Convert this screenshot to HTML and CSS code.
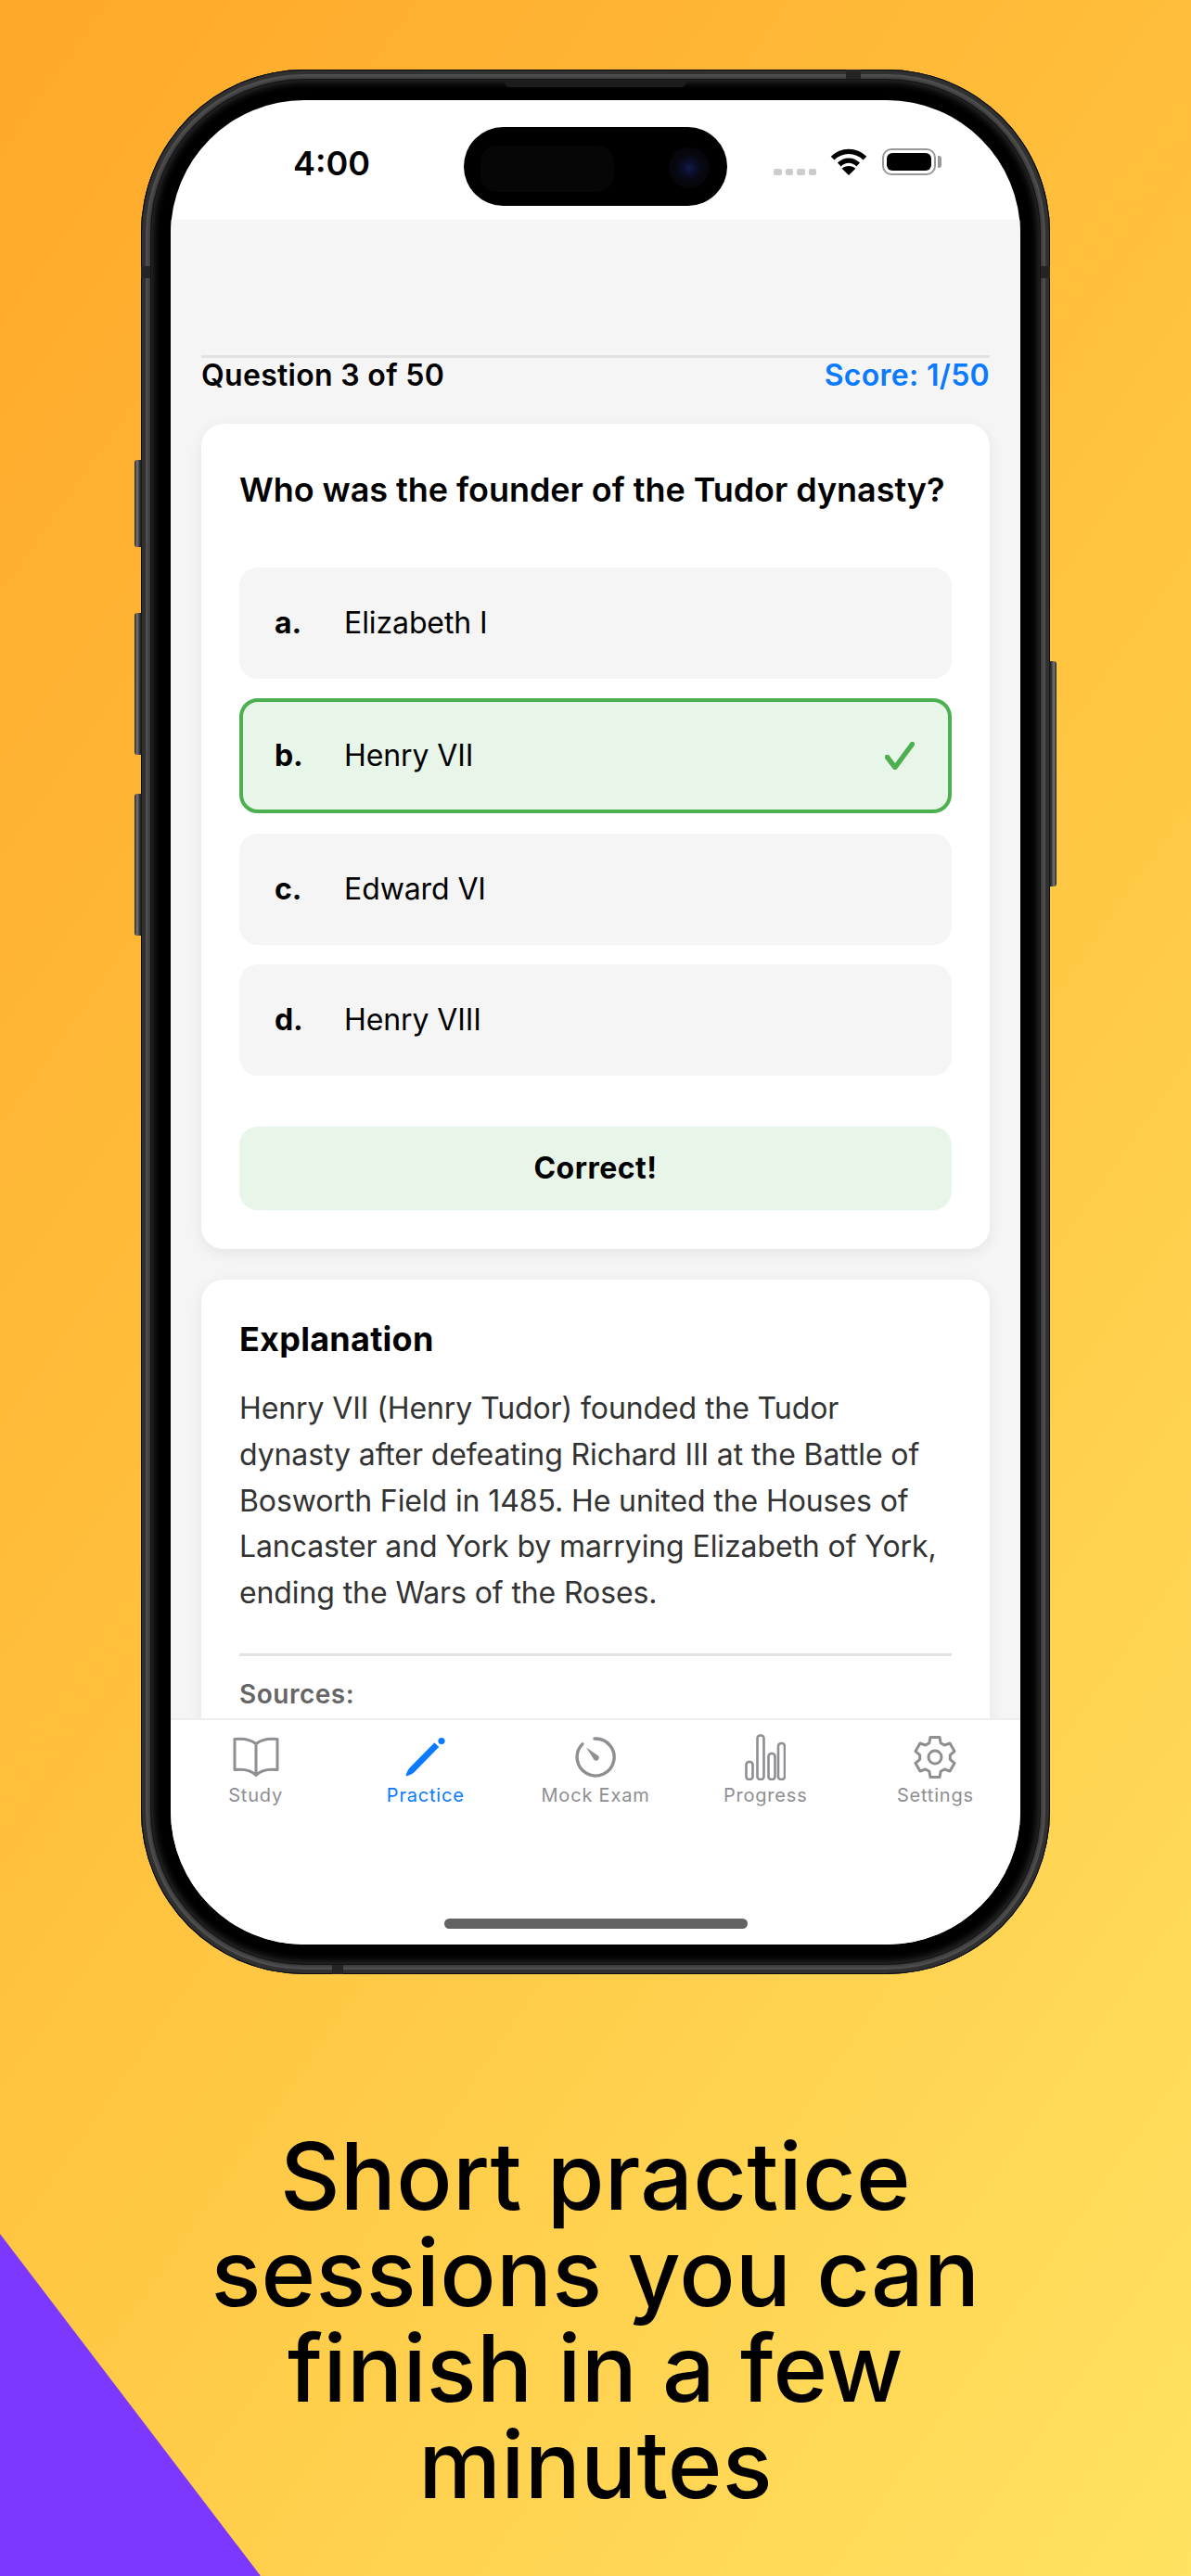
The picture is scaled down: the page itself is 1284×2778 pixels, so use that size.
FILE: index.html
```html
<!DOCTYPE html>
<html lang="en">
<head>
    <meta charset="UTF-8">
    <meta name="viewport" content="width=device-width, initial-scale=1.0">
    <title>Short practice sessions</title>
    <link rel="stylesheet" href="styles.css">
</head>
<body>
    <div class="corner"></div>

    <div class="phone">
        <span class="side-btn btn-mute"></span>
        <span class="side-btn btn-up"></span>
        <span class="side-btn btn-down"></span>
        <span class="side-btn btn-power"></span>
        <span class="band band-top"></span>
        <span class="band band-bottom"></span>
        <span class="band band-left"></span>
        <span class="band band-right"></span>

        <div class="bezel">
            <span class="speaker"></span>
            <div class="screen">
                <div class="status-bar">
                    <div class="time">4:00</div>
                    <div class="island">
                        <span class="island-sensor"></span>
                        <span class="island-lens"></span>
                    </div>
                    <div class="status-icons">
                        <div class="signal"><i></i><i></i><i></i><i></i></div>
                        <svg class="wifi" viewBox="0 0 40 29">
                            <path d="M2.6 10.6C12.5 .9 27.5 .9 37.4 10.6" fill="none" stroke="#000" stroke-width="5.4"/>
                            <path d="M9.8 17.5C15.8 11.6 24.2 11.6 30.2 17.5" fill="none" stroke="#000" stroke-width="5.4"/>
                            <path d="M20 29L12.6 21.8C16.8 18.2 23.2 18.2 27.4 21.8Z"/>
                        </svg>
                        <div class="battery"><span class="battery-fill"></span></div>
                    </div>
                </div>

                <div class="content">
                    <div class="progress-row">
                        <span class="progress-label">Question 3 of 50</span>
                        <span class="score">Score: 1/50</span>
                    </div>

                    <div class="card quiz-card">
                        <h2 class="question">Who was the founder of the Tudor dynasty?</h2>
                        <div class="options">
                            <div class="option"><b>a.</b><span>Elizabeth I</span></div>
                            <div class="option correct">
                                <b>b.</b><span>Henry VII</span>
                                <svg class="tick" viewBox="0 0 32 30"><path d="M2.5 16.5L11 27.5L29.5 2.5" fill="none" stroke="#4caf50" stroke-width="5.4" stroke-linecap="round" stroke-linejoin="round"/></svg>
                            </div>
                            <div class="option"><b>c.</b><span>Edward VI</span></div>
                            <div class="option"><b>d.</b><span>Henry VIII</span></div>
                        </div>
                        <div class="result">Correct!</div>
                    </div>

                    <div class="card explain-card">
                        <h3>Explanation</h3>
                        <p>Henry VII (Henry Tudor) founded the Tudor dynasty after defeating Richard III at the Battle of Bosworth Field in 1485. He united the Houses of Lancaster and York by marrying Elizabeth of York, ending the Wars of the Roses.</p>
                        <div class="rule"></div>
                        <div class="sources">Sources:</div>
                    </div>
                </div>

                <div class="tabbar">
                    <div class="tab">
                        <svg class="tab-icon" width="50" height="50" viewBox="0 0 50 50">
                            <path d="M25 10.5C20 6.5 11 4.5 2 5.5V38.5C11 37.5 20 39 25 44.5C30 39 39 37.5 48 38.5V5.5C39 4.5 30 6.5 25 10.5ZM25 10.5V44.5" fill="none" stroke="#8e8e93" stroke-width="3" stroke-linejoin="round"/>
                        </svg>
                        <span>Study</span>
                    </div>
                    <div class="tab active">
                        <svg class="tab-icon" width="44" height="50" viewBox="0 0 44 44">
                            <path d="M.5 42.5C1 39 2.5 36 5 33L31.4 6.2L36.2 11L10 37.8C7.5 40.3 4 41.7 .5 42.5Z" fill="#0a7aff"/>
                            <circle cx="39" cy="4.5" r="3.6" fill="#0a7aff"/>
                        </svg>
                        <span>Practice</span>
                    </div>
                    <div class="tab">
                        <svg class="tab-icon" width="44" height="50" viewBox="0 0 44 44">
                            <path d="M21 2A20 20 0 1 1 7.9 7.9" fill="none" stroke="#8e8e93" stroke-width="3.4" stroke-linecap="round"/>
                            <path d="M12 11.5L25 20.5C26 22 26 23.5 25 24.8C23.6 26 22 26 20.6 25Z" fill="#8e8e93"/>
                        </svg>
                        <span>Mock Exam</span>
                    </div>
                    <div class="tab">
                        <svg class="tab-icon" width="44" height="50" viewBox="0 0 44 50">
                            <rect x="1.5" y="30" width="7" height="19" rx="3" fill="none" stroke="#8e8e93" stroke-width="2.6"/>
                            <rect x="13.5" y="1.5" width="7" height="47.5" rx="3" fill="none" stroke="#8e8e93" stroke-width="2.6"/>
                            <rect x="25.5" y="21" width="7" height="28" rx="3" fill="none" stroke="#8e8e93" stroke-width="2.6"/>
                            <rect x="36" y="10" width="7" height="39" rx="3" fill="none" stroke="#8e8e93" stroke-width="2.6"/>
                        </svg>
                        <span>Progress</span>
                    </div>
                    <div class="tab">
                        <svg class="tab-icon" width="48" height="50" viewBox="0 0 48 48">
                            <path d="M19 2.6H29L30.2 8.7L34.2 11L40.1 9L45 17.6L40.3 21.7V26.3L45 30.4L40.1 39L34.2 37L30.2 39.3L29 45.4H19L17.8 39.3L13.8 37L7.9 39L3 30.4L7.7 26.3V21.7L3 17.6L7.9 9L13.8 11L17.8 8.7Z" fill="none" stroke="#8e8e93" stroke-width="3" stroke-linejoin="round"/>
                            <circle cx="24" cy="24" r="7" fill="none" stroke="#8e8e93" stroke-width="3"/>
                        </svg>
                        <span>Settings</span>
                    </div>
                </div>
                <div class="home-indicator"></div>
            </div>
        </div>
    </div>

    <h1 class="headline">Short practice sessions you can finish in a few minutes</h1>
</body>
</html>
```

FILE: styles.css
```css
* {
    box-sizing: border-box;
}

body {
    position: relative;
    width: 1284px;
    height: 2778px;
    margin: 0;
    padding-top: 75px;
    overflow: hidden;
    font-family: Inter, "Liberation Sans", sans-serif;
    color: #000;
    background: linear-gradient(125deg, #ffa829 0%, #ffc33f 48%, #ffe261 100%);
}

.corner {
    position: absolute;
    left: 0;
    bottom: 0;
    width: 281px;
    height: 369px;
    background: #7d38ff;
    clip-path: polygon(0 0, 100% 100%, 0 100%);
}

/* phone frame */
.phone {
    position: relative;
    width: 980px;
    height: 2054px;
    margin: 0 auto;
    padding: 11px;
    border-radius: 176px;
    background: #3a3a3a;
    box-shadow: inset 0 0 0 1px #0a0a0a, inset 0 0 0 5px #303030, inset 0 0 3px 8px #505050;
}

.bezel {
    position: relative;
    height: 100%;
    padding: 22px 21px 21px;
    border-radius: 165px;
    background: #000;
    box-shadow: inset 0 0 8px 2px #333, 0 0 0 1px #141414;
}

.speaker {
    position: absolute;
    top: 2px;
    left: 381px;
    width: 196px;
    height: 6px;
    border-radius: 0 0 6px 6px;
    background: #1c1c1c;
}

.side-btn {
    position: absolute;
    left: -7px;
    width: 8px;
    border-radius: 3px 0 0 3px;
    background: linear-gradient(90deg, #1e1e1e, #777 35%, #333 70%, #111);
}

.btn-mute { top: 421px; height: 94px; }
.btn-up { top: 586px; height: 153px; }
.btn-down { top: 781px; height: 153px; }

.btn-power {
    top: 638px;
    left: auto;
    right: -7px;
    height: 243px;
    border-radius: 0 3px 3px 0;
    background: linear-gradient(270deg, #1e1e1e, #777 35%, #333 70%, #111);
}

.band {
    position: absolute;
    background: #242424;
}

.band-top { top: 0; left: 760px; width: 16px; height: 12px; }
.band-bottom { bottom: 0; left: 206px; width: 12px; height: 10px; }
.band-left { top: 212px; left: 0; width: 11px; height: 13px; }
.band-right { top: 212px; right: 0; width: 11px; height: 13px; }

.screen {
    position: relative;
    display: flex;
    flex-direction: column;
    height: 100%;
    overflow: hidden;
    border-radius: 144px;
    background: #fff;
}

/* status bar */
.status-bar {
    display: flex;
    flex: none;
    height: 129px;
    padding-top: 29px;
}

.time {
    width: 316px;
    padding: 17px 0 0 132px;
    font-size: 36px;
    font-weight: 600;
    line-height: 44px;
}

.island {
    position: relative;
    flex: none;
    width: 284px;
    height: 85px;
    border-radius: 43px;
    background: #000;
}

.island-sensor {
    position: absolute;
    top: 20px;
    left: 18px;
    width: 144px;
    height: 50px;
    border-radius: 18px;
    background: #060606;
}

.island-lens {
    position: absolute;
    top: 22px;
    left: 221px;
    width: 44px;
    height: 44px;
    border-radius: 50%;
    background: radial-gradient(circle, #141c4c 0, #0c0f2c 20%, #07070f 48%, #040404 100%);
}

.status-icons {
    display: flex;
    align-items: flex-start;
    padding-left: 50px;
    padding-top: 23px;
}

.signal {
    display: flex;
    gap: 4px;
    margin-top: 22px;
}

.signal i {
    width: 8.5px;
    height: 7px;
    border-radius: 2px;
    background: #ccc;
}

.wifi {
    width: 40px;
    height: 29px;
    margin-left: 15px;
}

.battery {
    position: relative;
    width: 58px;
    height: 29px;
    margin-left: 16px;
    padding: 3px;
    border: 2px solid #999;
    border-radius: 10px;
}

.battery::after {
    content: "";
    position: absolute;
    top: 6px;
    right: -8px;
    width: 4px;
    height: 13px;
    border-radius: 0 3px 3px 0;
    background: #999;
}

.battery-fill {
    display: block;
    height: 100%;
    border-radius: 6px;
    background: #000;
}

/* main content */
.content {
    flex: 1;
    min-height: 0;
    padding: 146px 33px 0;
    overflow: hidden;
    background: #f5f5f5;
}

.progress-row {
    display: flex;
    justify-content: space-between;
    height: 74px;
    border-top: 3px solid #e2e2e2;
    font-size: 32px;
    font-weight: 600;
    line-height: 37px;
    letter-spacing: 0.3px;
}

.score {
    color: #0a7aff;
}

.card {
    padding: 0 41px;
    border-radius: 24px;
    background: #fff;
    box-shadow: 0 4px 16px rgba(0, 0, 0, 0.07);
}

.quiz-card {
    height: 890px;
    padding-top: 48px;
}

.question {
    margin: 0 0 61px;
    font-size: 36px;
    font-weight: 600;
    line-height: 46px;
    letter-spacing: -0.05px;
    white-space: nowrap;
}

.options {
    display: flex;
    flex-direction: column;
    gap: 21.3px;
}

.option {
    display: flex;
    align-items: center;
    height: 120px;
    padding: 0 38px;
    border-radius: 20px;
    background: #f5f5f5;
    font-size: 32px;
    line-height: 40px;
    letter-spacing: -0.1px;
}

.option b {
    width: 75px;
    font-weight: 700;
}

.option.correct {
    height: 124px;
    padding: 0 34px;
    border: 4px solid #4caf50;
    background: #e8f5e9;
}

.tick {
    width: 32px;
    height: 30px;
    margin-left: auto;
    margin-right: 2px;
}

.result {
    display: flex;
    align-items: center;
    justify-content: center;
    height: 90px;
    margin-top: 55px;
    border-radius: 20px;
    background: #e8f5e9;
    font-size: 32px;
    font-weight: 700;
    letter-spacing: 0.5px;
}

.explain-card {
    margin-top: 33px;
    padding-top: 42px;
    padding-bottom: 40px;
}

.explain-card h3 {
    margin: 0 0 28px;
    font-size: 36px;
    font-weight: 700;
    line-height: 44px;
    letter-spacing: 0.25px;
}

.explain-card p {
    margin: 0;
    padding-right: 10px;
    color: #333;
    font-size: 32px;
    line-height: 49.8px;
    letter-spacing: -0.1px;
}

.rule {
    height: 3px;
    margin: 40px 0 23px;
    background: #e2e2e2;
}

.sources {
    color: #666;
    font-size: 28px;
    font-weight: 600;
    line-height: 36px;
    letter-spacing: 0.5px;
}

/* tab bar */
.tabbar {
    display: grid;
    flex: none;
    grid-template-columns: repeat(5, 1fr);
    height: 244px;
    padding-top: 15px;
    border-top: 2px solid #eee;
    background: #fff;
}

.tab {
    display: flex;
    flex-direction: column;
    align-items: center;
    color: #8e8e93;
    font-size: 20px;
    font-weight: 400;
    line-height: 24px;
    letter-spacing: 0.8px;
}

.tab-icon {
    margin-bottom: 4px;
}

.tab.active {
    color: #0a7aff;
}

.home-indicator {
    position: absolute;
    left: 295px;
    bottom: 17px;
    width: 327px;
    height: 11px;
    border-radius: 6px;
    background: #636363;
}

.headline {
    width: 900px;
    margin: 166px auto 0;
    font-size: 100px;
    font-weight: 450;
    line-height: 103.5px;
    letter-spacing: 0.25px;
    text-align: center;
}
```
